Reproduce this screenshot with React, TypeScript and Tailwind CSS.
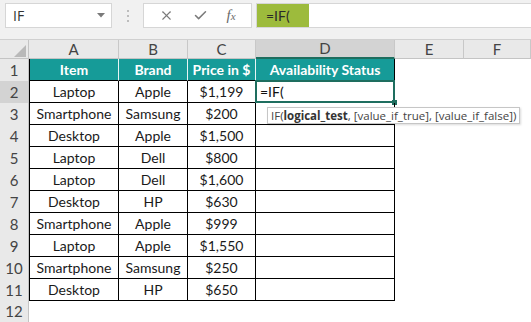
import * as React from 'react'
import { X, Check } from 'lucide-react'

const cols = [
  { key: 'A', w: 'w-[90px]' },
  { key: 'B', w: 'w-[69px]' },
  { key: 'C', w: 'w-[68px]' },
  { key: 'D', w: 'w-[139px]' },
  { key: 'E', w: 'w-[69px]' },
  { key: 'F', w: 'w-[67px]' },
]

const rows = [
  ['Laptop', 'Apple', '$1,199'],
  ['Smartphone', 'Samsung', '$200'],
  ['Desktop', 'Apple', '$1,500'],
  ['Laptop', 'Dell', '$800'],
  ['Laptop', 'Dell', '$1,600'],
  ['Desktop', 'HP', '$630'],
  ['Smartphone', 'Apple', '$999'],
  ['Laptop', 'Apple', '$1,550'],
  ['Smartphone', 'Samsung', '$250'],
  ['Desktop', 'HP', '$650'],
]

function RowHead({ n, active = false, h = 'h-[22px]' }: { n: number; active?: boolean; h?: string }) {
  return (
    <div
      className={
        'w-[29px] shrink-0 flex items-center justify-center border-r border-[#c4c4c4] text-[15px] text-[#444] ' +
        h +
        (active ? ' bg-[#d3d3d3]' : ' bg-[#e9e9e9]')
      }
    >
      {n}
    </div>
  )
}

function Toolbar() {
  return (
    <div className="h-[39px] bg-[#f1f1f1] flex items-start pt-[3px] pl-[5px]">
      {/* name box */}
      <div className="w-[107px] h-[25px] bg-white border border-[#d6d6d6] flex items-center justify-between pl-[7px] pr-[6px]">
        <span className="text-[14px] text-[#333] font-['Open_Sans',sans-serif]">IF</span>
        <svg width="8" height="5" viewBox="0 0 8 5">
          <path d="M0 0 L8 0 L4 4.5 Z" fill="#7a7a7a" />
        </svg>
      </div>
      {/* grip dots */}
      <div className="w-[31px] h-[25px] flex flex-col items-center justify-center gap-[3px]">
        <span className="w-[2px] h-[2px] bg-[#bdbdbd]" />
        <span className="w-[2px] h-[2px] bg-[#bdbdbd]" />
        <span className="w-[2px] h-[2px] bg-[#bdbdbd]" />
      </div>
      {/* cancel / enter / fx */}
      <div className="w-[109px] h-[25px] bg-white border border-[#d6d6d6] flex items-center justify-around px-[6px]">
        <X size={15} strokeWidth={1.7} color="#7a7a7a" />
        <Check size={15} strokeWidth={2.4} color="#7a7a7a" />
        <span className="text-[15px] text-[#6a6a6a] italic font-['Liberation_Serif',serif] leading-none">
          f<span className="text-[11px]">x</span>
        </span>
      </div>
      {/* formula input */}
      <div className="ml-[4px] flex-1 h-[25px] bg-white border-y border-l border-[#d6d6d6] flex items-stretch">
        <div className="w-[52px] bg-[#9dbb3c] flex items-center pl-[9px] text-[14px] text-[#2a2a2a]">=IF(</div>
      </div>
    </div>
  )
}

function ColumnHeads() {
  return (
    <div className="flex h-[20px] border-t border-[#d0d0d0]">
      <div className="w-[29px] shrink-0 bg-[#e9e9e9] border-r border-b border-[#c4c4c4] relative">
        <svg className="absolute left-[14px] top-[5px]" width="12" height="12" viewBox="0 0 12 12">
          <path d="M12 0 L12 12 L0 12 Z" fill="#b9b9b9" />
        </svg>
      </div>
      {cols.map((c) => (
        <div
          key={c.key}
          className={
            c.w +
            ' shrink-0 flex items-center justify-center text-[15px] text-[#444] border-r border-[#c8c8c8] ' +
            (c.key === 'D' ? 'bg-[#d3d3d3] border-b-2 border-b-[#1e6e5f]' : 'bg-[#e9e9e9] border-b border-b-[#c4c4c4]')
          }
        >
          {c.key}
        </div>
      ))}
    </div>
  )
}

export default function App() {
  return (
    <div className="w-[531px] h-[322px] bg-white overflow-hidden font-['Lato',sans-serif]">
      <Toolbar />
      <ColumnHeads />
      <div className="relative">
        {/* header row */}
        <div className="flex">
          <RowHead n={1} />
          {['Item', 'Brand', 'Price in $', 'Availability Status'].map((t, i) => (
            <div
              key={t}
              className={
                cols[i].w +
                ' shrink-0 h-[22px] bg-[#169b98] text-white font-bold text-[14px] flex items-center justify-center border-b border-black ' +
                (i === 0 ? 'border-l border-l-black ' : '') +
                (i === 3 ? 'border-r border-r-black' : 'border-r border-r-[#e6f4f4]')
              }
            >
              {t}
            </div>
          ))}
        </div>
        {rows.map((r, ri) => (
          <div key={ri} className="flex">
            <RowHead n={ri + 2} active={ri === 0} />
            {r.map((v, ci) => (
              <div
                key={ci}
                className={
                  cols[ci].w +
                  ' shrink-0 h-[22px] flex items-center justify-center text-[14px] text-[#1a1a1a] border-r border-b border-black ' +
                  (ci === 0 ? 'border-l' : '')
                }
              >
                {v}
              </div>
            ))}
            <div className={cols[3].w + ' shrink-0 h-[22px] border-r border-b border-black relative'}>
              {ri === 0 && (
                <>
                  <div className="absolute -left-px -top-px w-[140px] h-[23px] border-2 border-[#1e6e5f] flex items-center pl-[3px] text-[14px] text-[#111]">
                    =IF(
                  </div>
                  <div className="absolute right-[-3px] bottom-[-3px] w-[5px] h-[5px] bg-[#1e6e5f]" />
                </>
              )}
            </div>
          </div>
        ))}
        <div className="flex">
          <RowHead n={12} h="h-[21px]" />
        </div>
        {/* function tooltip */}
        <div className="absolute left-[267px] top-[48px] h-[17px] px-[3px] bg-white border border-[#c6c6c6] shadow-[1px_1px_2px_rgba(0,0,0,0.15)] flex items-center text-[11.5px] text-[#444] font-['Open_Sans',sans-serif] whitespace-nowrap">
          IF(<span className="font-bold text-[#333]">logical_test</span>, [value_if_true], [value_if_false])
        </div>
      </div>
    </div>
  )
}
